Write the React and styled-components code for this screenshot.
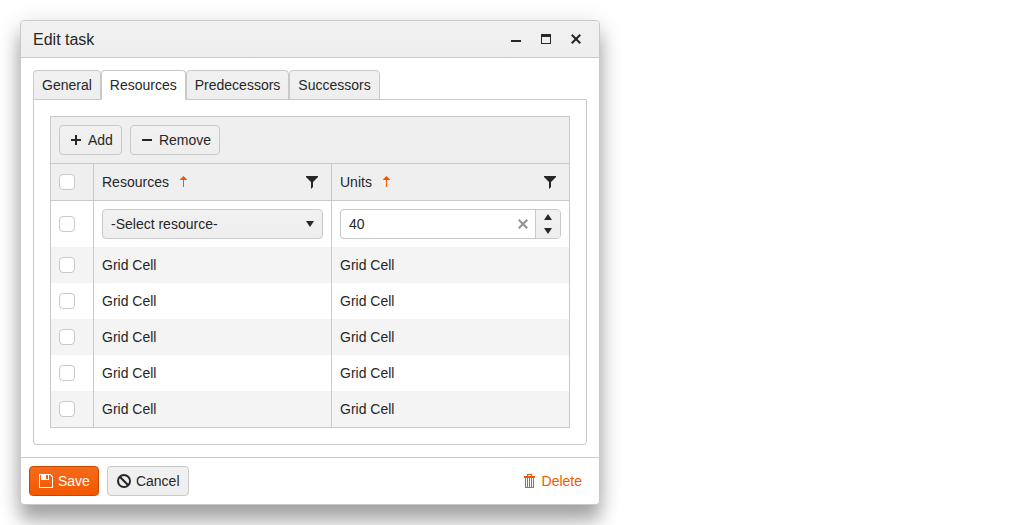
import React, { useState } from "react";
import styled, { createGlobalStyle, css } from "styled-components";

const line = "#c9c9c9";
const ink = "#272727";
const accent = "#f35800";
const surface = "linear-gradient(#f1f1f1, #eeeeee)";

const GlobalStyle = createGlobalStyle`
  *, *::before, *::after { box-sizing: border-box; }
  body {
    margin: 0;
    background: #fff;
    color: ${ink};
    font: 14px/20px "Liberation Sans", Arial, sans-serif;
  }
  button, input, select { font: inherit; color: inherit; margin: 0; }
`;

const Page = styled.main`
  padding: 20px;
`;

const Dialog = styled.section`
  max-width: 580px;
  border: 1px solid ${line};
  border-radius: 4px;
  background: #fff;
  box-shadow: 0 16px 18px rgba(0, 0, 0, 0.3), 0 4px 24px rgba(0, 0, 0, 0.14);
`;

const TitleBar = styled.header`
  display: flex;
  align-items: center;
  padding: 3px 8px 3px 12px;
  border-bottom: 1px solid ${line};
  border-radius: 3px 3px 0 0;
  background: ${surface};
`;

const Title = styled.h1`
  flex: 1;
  margin: 0;
  padding-top: 2px;
  font-size: 16px;
  line-height: 20px;
  font-weight: 400;
`;

const IconButton = styled.button`
  display: inline-flex;
  align-items: center;
  justify-content: center;
  width: ${(p) => p.$size || 30}px;
  height: ${(p) => p.$size || 30}px;
  padding: 0;
  border: 0;
  background: none;
  color: ${(p) => p.$color || "inherit"};
  cursor: pointer;
`;

const Svg = styled.svg`
  display: block;
  flex: none;
  width: 16px;
  height: 16px;
  fill: currentColor;
`;

const Body = styled.div`
  padding: 12px;
`;

const TabList = styled.div`
  display: flex;
  position: relative;
`;

const Tab = styled.button`
  padding: 4px 8px;
  margin-bottom: -1px;
  border: 1px solid ${line};
  border-radius: 4px 4px 0 0;
  background: ${surface};
  cursor: pointer;
  ${(p) =>
    p.$active &&
    css`
      background: #fff;
      border-bottom-color: #fff;
    `}
`;

const TabPanel = styled.div`
  padding: 16px;
  border: 1px solid ${line};
  border-radius: 0 0 4px 4px;
`;

const Grid = styled.div`
  border: 1px solid ${line};
`;

const Toolbar = styled.div`
  display: flex;
  gap: 8px;
  padding: 8px;
  border-bottom: 1px solid ${line};
  background: #efefef;
`;

const Button = styled.button`
  display: inline-flex;
  align-items: center;
  gap: 4px;
  padding: 4px 8px;
  border: 1px solid ${line};
  border-radius: 4px;
  background: ${surface};
  cursor: pointer;
  ${(p) =>
    p.$kind === "primary" &&
    css`
      color: #fff;
      border-color: #c54800;
      background: linear-gradient(#f66a1b, #f35800);
    `}
  ${(p) =>
    p.$kind === "flat" &&
    css`
      color: ${accent};
      border-color: transparent;
      background: none;
    `}
`;

const Table = styled.table`
  width: 100%;
  table-layout: fixed;
  border-collapse: separate;
  border-spacing: 0;
`;

const CheckColumn = styled.col`
  width: 42px;
`;

const HeadCell = styled.th`
  height: 37px;
  padding: 0 8px;
  border-bottom: 1px solid ${line};
  background: #efefef;
  font-weight: 400;
  text-align: left;
  & + & { border-left: 1px solid ${line}; }
`;

const HeadContent = styled.div`
  display: flex;
  align-items: center;
  gap: 6px;
  padding-right: 3px;
`;

const Spacer = styled.span`
  flex: 1;
`;

const Row = styled.tr`
  background: ${(p) => (p.$striped ? "#f4f4f4" : "#fff")};
`;

const Cell = styled.td`
  height: 36px;
  padding: 8px;
  & + & { border-left: 1px solid ${line}; }
`;

const Checkbox = styled.input.attrs({ type: "checkbox" })`
  appearance: none;
  display: block;
  width: 16px;
  height: 16px;
  border: 1px solid ${line};
  border-radius: 4px;
  background: #fff;
  &:checked {
    border-color: ${accent};
    background: ${accent};
  }
`;

const SelectBox = styled.div`
  display: grid;
  align-items: center;
  & > * { grid-area: 1 / 1; }
  & > svg {
    justify-self: end;
    margin-right: 5px;
    pointer-events: none;
  }
`;

const Select = styled.select`
  appearance: none;
  width: 100%;
  height: 30px;
  padding: 0 24px 0 8px;
  border: 1px solid ${line};
  border-radius: 4px;
  background: ${surface};
`;

const NumberBox = styled.div`
  display: flex;
  align-items: stretch;
  height: 30px;
  border: 1px solid ${line};
  border-radius: 4px;
  background: #fff;
  overflow: hidden;
`;

const NumberInput = styled.input`
  flex: 1;
  min-width: 0;
  padding: 0 8px;
  border: 0;
  background: none;
  outline: none;
`;

const ClearButton = styled(IconButton)`
  width: 24px;
  height: 28px;
  color: #939393;
`;

const Spinner = styled.div`
  display: flex;
  flex-direction: column;
  width: 25px;
  border-left: 1px solid ${line};
  background: ${surface};
`;

const SpinButton = styled(IconButton)`
  width: 24px;
  height: 14px;
`;

const Footer = styled.footer`
  display: flex;
  gap: 8px;
  padding: 8px;
  border-top: 1px solid ${line};
`;

const paths = {
  minimize: "M3 9h10v2H3z",
  maximize: "M3 3h10v10H3zM4 6v6h8V6z",
  close: "M4.500 3 8 6.500 11.500 3 13 4.500 9.500 8 13 11.500 11.500 13 8 9.500 4.500 13 3 11.500 6.500 8 3 4.500z",
  plus: "M7 3h2v4h4v2H9v4H7V9H3V7h4z",
  minus: "M3 7h10v2H3z",
  filter: "M2 2h12v1L9 8v5l-2 2V8L2 3z",
  sort: "M8.500 2 12 5.500V6H9v7H8V6H5v-.5z",
  caretDown: "M4 5h8l-4 6z",
  spinUp: "M4 11h8L8 5z",
  save: "M1 1h11.500L15 3.500V15H1zM2 2v12h12V4l-2-2h-1v5H3V2zM8 2v4h2V2z",
  cancel:
    "M8 1a7 7 0 1 0 0 14A7 7 0 0 0 8 1zM3 8a5 5 0 0 1 .8-2.700l6.900 6.900A5 5 0 0 1 3 8zm9.200 2.700L5.300 3.800a5 5 0 0 1 6.900 6.900z",
  trash:
    "M5 1h5v2h3v2h-1v10H3V5H2V3h3zM6 2v1h3V2zM4 5v9h1V5zM6 5v9h1V5zM8 5v9h1V5zM10 5v9h1V5z",
};

const Icon = ({ name }) => (
  <Svg viewBox="0 0 16 16" fillRule="evenodd" aria-hidden="true">
    <path d={paths[name]} />
  </Svg>
);

const tabs = ["General", "Resources", "Predecessors", "Successors"];
const rows = [1, 2, 3, 4, 5];

const ColumnHeader = ({ label }) => (
  <HeadCell scope="col">
    <HeadContent>
      {label}
      <IconButton $size={16} $color={accent} aria-label={`Sort by ${label}`}>
        <Icon name="sort" />
      </IconButton>
      <Spacer />
      <IconButton $size={16} aria-label={`Filter ${label}`}>
        <Icon name="filter" />
      </IconButton>
    </HeadContent>
  </HeadCell>
);

export default function App() {
  const [active, setActive] = useState("Resources");
  const [units, setUnits] = useState("40");
  const step = (by) => setUnits((value) => String(Number(value) + by));

  return (
    <>
      <GlobalStyle />
      <Page>
        <Dialog role="dialog" aria-labelledby="dialog-title">
          <TitleBar>
            <Title id="dialog-title">Edit task</Title>
            <IconButton aria-label="Minimize"><Icon name="minimize" /></IconButton>
            <IconButton aria-label="Maximize"><Icon name="maximize" /></IconButton>
            <IconButton aria-label="Close"><Icon name="close" /></IconButton>
          </TitleBar>
          <Body>
            <TabList role="tablist">
              {tabs.map((tab) => (
                <Tab
                  key={tab}
                  role="tab"
                  aria-selected={tab === active}
                  $active={tab === active}
                  onClick={() => setActive(tab)}
                >
                  {tab}
                </Tab>
              ))}
            </TabList>
            <TabPanel role="tabpanel" aria-label={active}>
              <Grid>
                <Toolbar>
                  <Button><Icon name="plus" />Add</Button>
                  <Button><Icon name="minus" />Remove</Button>
                </Toolbar>
                <Table>
                  <colgroup>
                    <CheckColumn />
                    <col />
                    <col />
                  </colgroup>
                  <thead>
                    <tr>
                      <HeadCell scope="col"><Checkbox aria-label="Select all rows" /></HeadCell>
                      <ColumnHeader label="Resources" />
                      <ColumnHeader label="Units" />
                    </tr>
                  </thead>
                  <tbody>
                    <Row>
                      <Cell><Checkbox aria-label="Select edited row" /></Cell>
                      <Cell>
                        <SelectBox>
                          <Select aria-label="Resource">
                            <option>-Select resource-</option>
                          </Select>
                          <Icon name="caretDown" />
                        </SelectBox>
                      </Cell>
                      <Cell>
                        <NumberBox>
                          <NumberInput
                            aria-label="Units"
                            inputMode="numeric"
                            value={units}
                            onChange={(e) => setUnits(e.target.value)}
                          />
                          <ClearButton aria-label="Clear" onClick={() => setUnits("")}>
                            <Icon name="close" />
                          </ClearButton>
                          <Spinner>
                            <SpinButton aria-label="Increase" onClick={() => step(1)}>
                              <Icon name="spinUp" />
                            </SpinButton>
                            <SpinButton aria-label="Decrease" onClick={() => step(-1)}>
                              <Icon name="caretDown" />
                            </SpinButton>
                          </Spinner>
                        </NumberBox>
                      </Cell>
                    </Row>
                    {rows.map((row) => (
                      <Row key={row} $striped={row % 2 === 1}>
                        <Cell><Checkbox aria-label={`Select row ${row}`} /></Cell>
                        <Cell>Grid Cell</Cell>
                        <Cell>Grid Cell</Cell>
                      </Row>
                    ))}
                  </tbody>
                </Table>
              </Grid>
            </TabPanel>
          </Body>
          <Footer>
            <Button $kind="primary"><Icon name="save" />Save</Button>
            <Button><Icon name="cancel" />Cancel</Button>
            <Spacer />
            <Button $kind="flat"><Icon name="trash" />Delete</Button>
          </Footer>
        </Dialog>
      </Page>
    </>
  );
}
